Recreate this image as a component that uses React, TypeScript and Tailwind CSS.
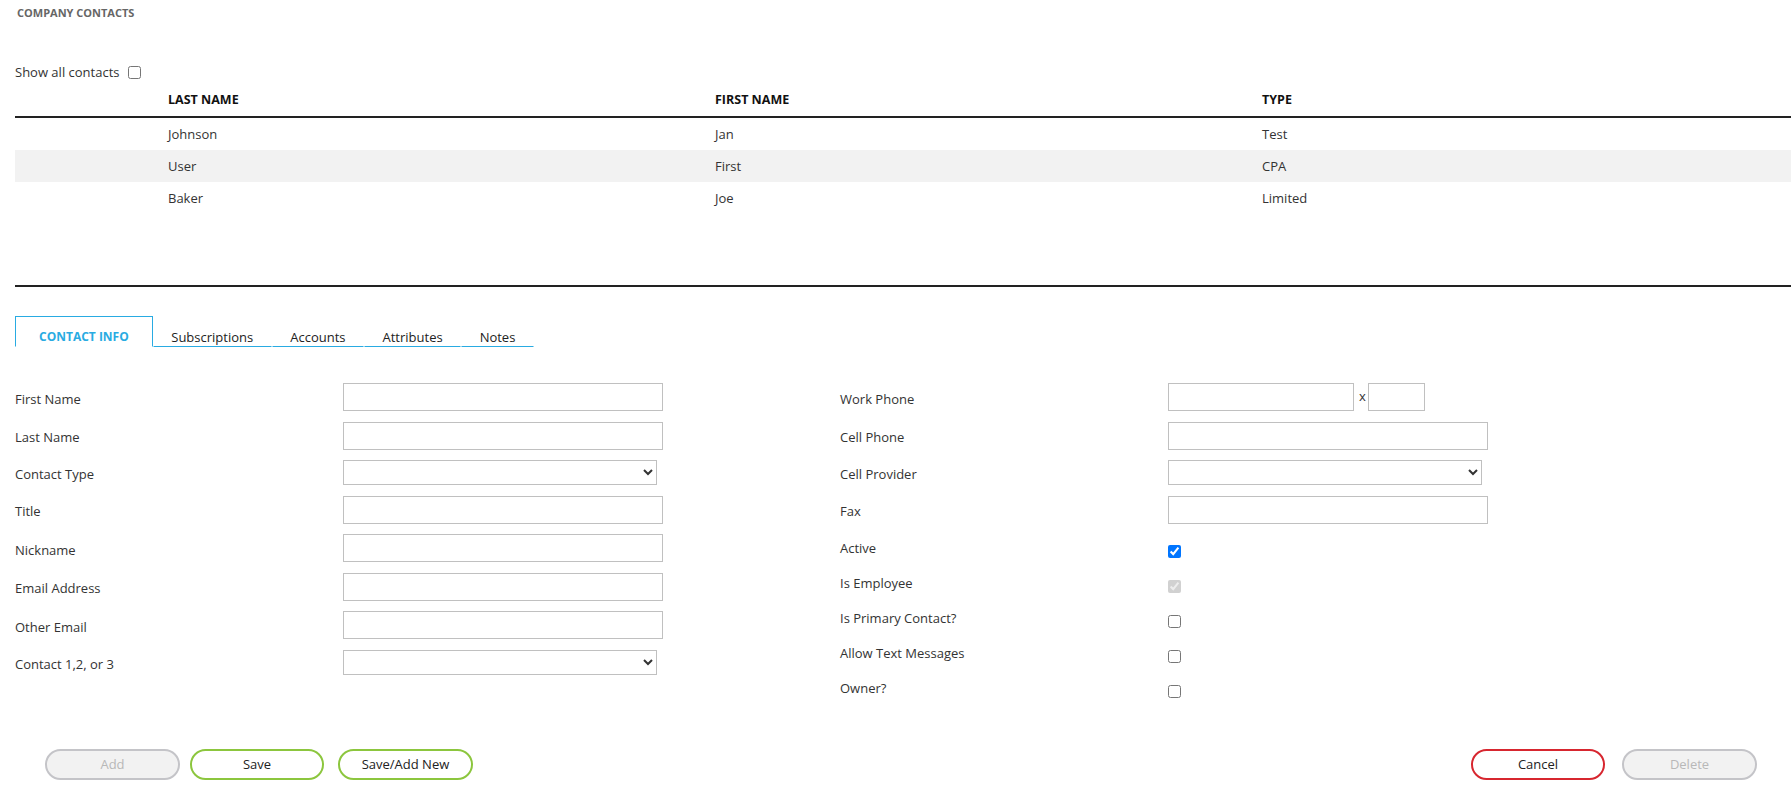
const contacts = [
  { last: 'Johnson', first: 'Jan', type: 'Test' },
  { last: 'User', first: 'First', type: 'CPA' },
  { last: 'Baker', first: 'Joe', type: 'Limited' },
];

const tabs = ['Subscriptions', 'Accounts', 'Attributes', 'Notes'];

const leftFields: { label: string; kind: 'input' | 'select' }[] = [
  { label: 'First Name', kind: 'input' },
  { label: 'Last Name', kind: 'input' },
  { label: 'Contact Type', kind: 'select' },
  { label: 'Title', kind: 'input' },
  { label: 'Nickname', kind: 'input' },
  { label: 'Email Address', kind: 'input' },
  { label: 'Other Email', kind: 'input' },
  { label: 'Contact 1,2, or 3', kind: 'select' },
];

const checks = [
  { label: 'Active', checked: true, disabled: false },
  { label: 'Is Employee', checked: true, disabled: true },
  { label: 'Is Primary Contact?', checked: false, disabled: false },
  { label: 'Allow Text Messages', checked: false, disabled: false },
  { label: 'Owner?', checked: false, disabled: false },
];

function TextBox({ className = 'w-[320px]' }: { className?: string }) {
  return <input type="text" className={`h-[28px] border border-[#c0c0c0] bg-white px-1 ${className}`} />;
}

function SelectBox() {
  return (
    <select className="h-[25px] w-[314px] border border-[#c0c0c0] bg-white">
      <option></option>
    </select>
  );
}

function Row({ label, children }: { label: string; children: React.ReactNode }) {
  return (
    <div className="mb-[10.5px] flex items-center">
      <div className="w-[328px] shrink-0 pt-[5px]">{label}</div>
      {children}
    </div>
  );
}

export default function App() {
  return (
    <div className="min-h-screen bg-white pl-[15px] text-[13px] text-[#333] font-['Open_Sans',sans-serif]">
      <div className="pl-[2px] pt-[5px] text-[11px] font-bold leading-[15px] text-[#666]">COMPANY CONTACTS</div>

      <div className="mt-[43px] flex h-[18px] items-center gap-[9px] leading-[18px]">
        <span>Show all contacts</span>
        <input type="checkbox" className="h-[13px] w-[13px]" />
      </div>

      {/* contacts grid */}
      <div className="mt-[1px] h-[205px] border-b-2 border-[#222]">
        <div className="grid h-[36px] grid-cols-[145px_547px_547px_1fr] items-center border-b-2 border-[#222] pt-[3px] text-[12.5px] font-bold text-[#111]">
          <div></div>
          <div className="px-2">LAST NAME</div>
          <div className="px-2">FIRST NAME</div>
          <div className="px-2">TYPE</div>
        </div>
        {contacts.map((c, i) => (
          <div
            key={c.last}
            className={`grid h-[32px] grid-cols-[145px_547px_547px_1fr] items-center pt-[1px] ${i % 2 === 1 ? 'bg-[#f2f2f2]' : ''}`}
          >
            <div></div>
            <div className="px-2">{c.last}</div>
            <div className="px-2">{c.first}</div>
            <div className="px-2">{c.type}</div>
          </div>
        ))}
      </div>

      {/* tabs */}
      <div className="mt-[29px] flex">
        <div className="h-[31px] border border-[#29abe2] border-b-transparent px-[23px] pt-[11px] text-[12px] font-bold leading-[18px] text-[#29abe2]">
          CONTACT INFO
        </div>
        {tabs.map((t) => (
          <div
            key={t}
            className="h-[31px] border border-transparent border-b-[#29abe2] px-[17.5px] pt-[11px] leading-[18px] text-[#222]"
          >
            {t}
          </div>
        ))}
      </div>

      {/* form */}
      <div className="mt-[36px] grid grid-cols-[825px_1fr] items-start">
        <div>
          {leftFields.map((f) => (
            <Row key={f.label} label={f.label}>
              {f.kind === 'input' ? <TextBox /> : <SelectBox />}
            </Row>
          ))}
        </div>
        <div>
          <Row label="Work Phone">
            <TextBox className="w-[186px]" />
            <span className="ml-[5px] mr-[2px]">x</span>
            <TextBox className="w-[57px]" />
          </Row>
          <Row label="Cell Phone">
            <TextBox />
          </Row>
          <Row label="Cell Provider">
            <SelectBox />
          </Row>
          <Row label="Fax">
            <TextBox />
          </Row>
          {checks.map((c) => (
            <div key={c.label} className="flex h-[35px] items-center">
              <div className="w-[328px] shrink-0 pb-[6px]">{c.label}</div>
              <input
                type="checkbox"
                defaultChecked={c.checked}
                disabled={c.disabled}
                className="h-[13px] w-[13px]"
              />
            </div>
          ))}
        </div>
      </div>

      {/* buttons */}
      <div className="mt-[40px] flex justify-between">
        <div className="ml-[30px] flex">
          <button className="h-[31px] w-[135px] rounded-full border-2 border-[#c4c4c8] bg-[#f2f2f2] text-[#b8b8b8]">Add</button>
          <button className="ml-[10px] h-[31px] w-[134px] rounded-full border-2 border-[#8cc63e] bg-white text-[#222]">Save</button>
          <button className="ml-[14px] h-[31px] w-[135px] rounded-full border-2 border-[#8cc63e] bg-white text-[#222]">Save/Add New</button>
        </div>
        <div className="mr-[34px] flex gap-[17px]">
          <button className="h-[31px] w-[134px] rounded-full border-2 border-[#d7262f] bg-white text-[#222]">Cancel</button>
          <button className="h-[31px] w-[135px] rounded-full border-2 border-[#c4c4c8] bg-[#f2f2f2] text-[#b8b8b8]">Delete</button>
        </div>
      </div>
    </div>
  );
}
